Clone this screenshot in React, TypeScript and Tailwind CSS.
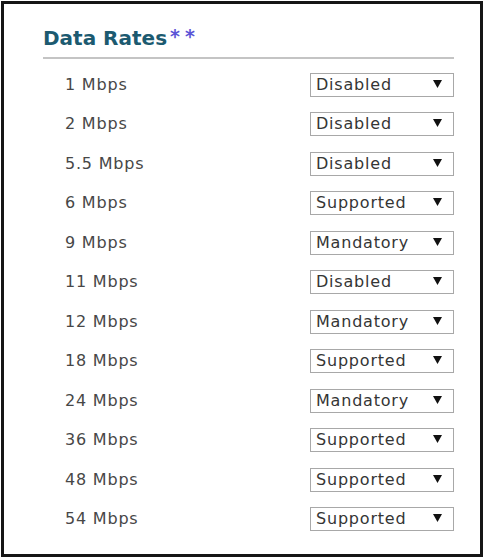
const RATES: [string, string][] = [
  ['1 Mbps', 'Disabled'],
  ['2 Mbps', 'Disabled'],
  ['5.5 Mbps', 'Disabled'],
  ['6 Mbps', 'Supported'],
  ['9 Mbps', 'Mandatory'],
  ['11 Mbps', 'Disabled'],
  ['12 Mbps', 'Mandatory'],
  ['18 Mbps', 'Supported'],
  ['24 Mbps', 'Mandatory'],
  ['36 Mbps', 'Supported'],
  ['48 Mbps', 'Supported'],
  ['54 Mbps', 'Supported'],
];

function FakeSelect({ value }: { value: string }) {
  return (
    <div className="flex h-[24px] w-[144px] items-center justify-between border border-[#a8a8a8] bg-white pl-[5px] pr-[11px]">
      <span className="text-[16px] leading-none tracking-[0.8px] text-[#353535]">{value}</span>
      <svg width="9" height="8" viewBox="0 0 9 8" className="mb-[2px]">
        <path d="M0 0 H9 L4.5 8 Z" fill="#111" />
      </svg>
    </div>
  );
}

export default function App() {
  return (
    <div className="h-[558px] w-[484px] bg-white p-px" style={{ fontFamily: '"DejaVu Sans", Verdana, sans-serif' }}>
      <div className="h-full border-[3px] border-[#151515] pl-[39px] pr-[26px] pt-[22px]">
        <h2 className="text-[20px] font-bold leading-[24px] text-[#1c5a70]">
          Data Rates
          <span className="ml-[3px] align-top text-[19px] leading-[20px] tracking-[5px] text-[#5b55d6]">**</span>
        </h2>
        <div className="mt-[7px] h-[2px] bg-[#c4c4c4]" />
        <div className="mt-[6px] flex flex-col">
          {RATES.map(([rate, mode]) => (
            <div key={rate} className="flex h-[39.5px] items-center justify-between pl-[22px]">
              <span className="text-[16px] tracking-[0.8px] text-[#474747]">{rate}</span>
              <FakeSelect value={mode} />
            </div>
          ))}
        </div>
      </div>
    </div>
  );
}
